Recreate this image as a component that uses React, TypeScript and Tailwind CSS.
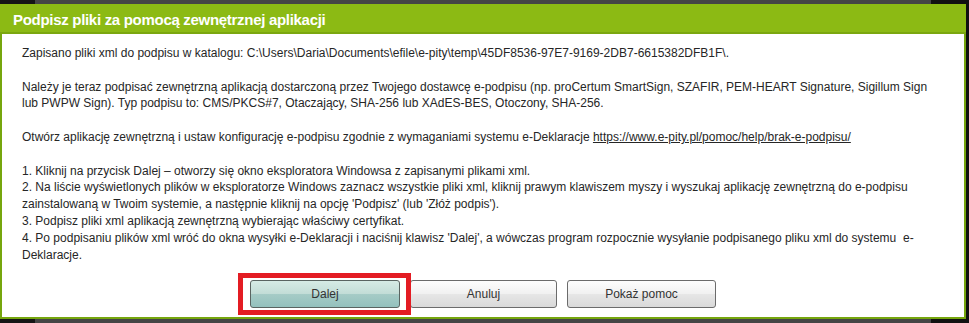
import React from 'react';

const font = { fontFamily: '"Liberation Sans", Arial, sans-serif' };

function Btn({ label, primary }: { label: string; primary?: boolean }) {
  return (
    <button
      className={`h-[28px] w-full rounded-[3px] border text-[12px] text-[#333] ${
        primary
          ? 'border-[#5a6461] bg-[linear-gradient(to_bottom,#d6ebe5_0%,#c3ddd7_48%,#a5cbc6_52%,#94c1bd_100%)]'
          : 'border-[#6b6b6b] bg-[linear-gradient(to_bottom,#fdfdfd_0%,#f1f1f1_48%,#e6e6e6_52%,#d9d9d9_100%)]'
      }`}
    >
      {label}
    </button>
  );
}

export default function App() {
  return (
    <div
      className="h-[323px] w-[969px] overflow-hidden pt-[4px] bg-[linear-gradient(to_right,#151515_35px,#454545_35px,#454545_931px,#111111_931px)]"
      style={font}
    >
      <div className="w-[966px] h-[315px] flex flex-col border-x-2 border-b-2 border-[#76a60d] bg-white">
        <div className="h-[30px] -mx-[2px] bg-[#8cba14] border-b-2 border-[#7ba70f] pl-[13px] flex items-center">
          <h1 className="text-[15px] font-bold text-white leading-none pt-[2px] tracking-[-0.3px]">
            Podpisz pliki za pomocą zewnętrznej aplikacji
          </h1>
        </div>

        <div className="flex-1 pl-[20px] pr-[24px] pt-[11px] text-[12px] leading-[16.8px] text-[#262626]">
          <p className="mb-[16.8px]">
            Zapisano pliki xml do podpisu w katalogu: C:\Users\Daria\Documents\efile\e-pity\temp\45DF8536-97E7-9169-2DB7-6615382DFB1F\.
          </p>
          <p className="mb-[16.8px]">
            Należy je teraz podpisać zewnętrzną aplikacją dostarczoną przez Twojego dostawcę e-podpisu (np. proCertum SmartSign, SZAFIR, PEM-HEART Signature, Sigillum Sign lub PWPW Sign). Typ podpisu to: CMS/PKCS#7, Otaczający, SHA-256 lub XAdES-BES, Otoczony, SHA-256.
          </p>
          <p className="mb-[16.8px]">
            Otwórz aplikację zewnętrzną i ustaw konfigurację e-podpisu zgodnie z wymaganiami systemu e-Deklaracje{' '}
            <a className="underline">https://www.e-pity.pl/pomoc/help/brak-e-podpisu/</a>
          </p>
          <p>1. Kliknij na przycisk Dalej – otworzy się okno eksploratora Windowsa z zapisanymi plikami xml.</p>
          <p>
            2. Na liście wyświetlonych plików w eksploratorze Windows zaznacz wszystkie pliki xml, kliknij prawym klawiszem myszy i wyszukaj aplikację zewnętrzną do e-podpisu zainstalowaną w Twoim systemie, a następnie kliknij na opcję 'Podpisz' (lub 'Złóż podpis').
          </p>
          <p>3. Podpisz pliki xml aplikacją zewnętrzną wybierając właściwy certyfikat.</p>
          <p>
            4. Po podpisaniu plików xml wróć do okna wysyłki e-Deklaracji i naciśnij klawisz 'Dalej', a wówczas program rozpocznie wysyłanie podpisanego pliku xml do systemu &nbsp;e-Deklaracje.
          </p>
        </div>

        <div className="flex justify-center gap-[10px] pb-[9px]">
          <div className="relative w-[150px]">
            <Btn label="Dalej" primary />
            <div className="absolute -left-[12px] -right-[11px] -top-[7px] -bottom-[7px] border-[5px] border-[#e31c23] pointer-events-none" />
          </div>
          <div className="w-[147px]">
            <Btn label="Anuluj" />
          </div>
          <div className="w-[149px]">
            <Btn label="Pokaż pomoc" />
          </div>
        </div>
      </div>
    </div>
  );
}
